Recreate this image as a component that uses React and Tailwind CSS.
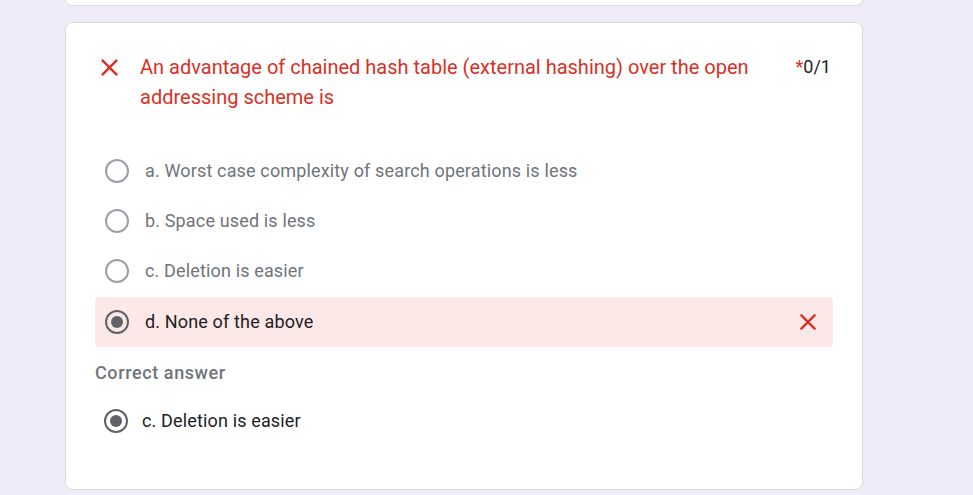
import React from 'react';

const options = [
  { id: 'a', label: 'a. Worst case complexity of search operations is less' },
  { id: 'b', label: 'b. Space used is less' },
  { id: 'c', label: 'c. Deletion is easier' },
  { id: 'd', label: 'd. None of the above', chosen: true },
];

const CloseIcon = ({ className }) => (
  <svg className={className} viewBox="0 0 24 24" fill="currentColor">
    <path d="M19 6.41 17.59 5 12 10.59 6.41 5 5 6.41 10.59 12 5 17.59 6.41 19 12 13.41 17.59 19 19 17.59 13.41 12z" />
  </svg>
);

const Radio = ({ checked }) =>
  checked ? (
    <span className="w-6 h-6 rounded-full border-2 border-[#5f6368] flex items-center justify-center shrink-0">
      <span className="w-3 h-3 rounded-full bg-[#5f6368]" />
    </span>
  ) : (
    <span className="w-6 h-6 rounded-full border-2 border-[#9aa0a6] shrink-0" />
  );

const App = () => {
  return (
    <div className="min-h-screen bg-[#f0ebf8] font-['Roboto',sans-serif]">
      <div className="ml-[65px] w-[798px]">
        {/* bottom of the previous question card */}
        <div className="h-[6px] bg-white border border-t-0 border-[#dadce0] rounded-b-lg" />

        <div className="mt-4 bg-white border border-[#dadce0] rounded-lg px-[29px] pt-[29px] pb-[47px]">
          <div className="flex items-start">
            <div className="w-[29px] h-[30px] flex items-center justify-center shrink-0">
              <CloseIcon className="w-[29px] h-[29px] text-[#d93025]" />
            </div>
            <div className="flex-1 ml-4 pr-4 text-[20px] leading-[30px] text-[#d93025]">
              An advantage of chained hash table (external hashing) over the open addressing scheme is
            </div>
            <div className="text-[18px] leading-[30px] text-[#202124] pr-[2px]">
              <span className="text-[#d93025]">*</span>0/1
            </div>
          </div>

          <div className="mt-[34px] flex flex-col">
            {options.map(o => (
              <div
                key={o.id}
                className={`h-[50px] flex items-center pl-[10px] pr-[11px] rounded ${o.chosen ? 'bg-[#fce8e6] mt-px' : ''}`}
              >
                <Radio checked={o.chosen} />
                <span className={`ml-4 flex-1 text-[18px] leading-[22px] pb-px tracking-[0.15px] ${o.chosen ? 'text-[#202124]' : 'text-[#70757a]'}`}>
                  {o.label}
                </span>
                {o.chosen && <CloseIcon className="w-[28px] h-[28px] text-[#d93025]" />}
              </div>
            ))}
          </div>

          <div className="mt-[16px] text-[18px] font-medium tracking-[0.6px] text-[#70757a] leading-[20px]">Correct answer</div>

          <div className="mt-[17px] h-[42px] flex items-center pl-[9px]">
            <Radio checked />
            <span className="ml-[14px] text-[18px] leading-[22px] tracking-[0.15px] text-[#202124]">c. Deletion is easier</span>
          </div>
        </div>
      </div>
    </div>
  );
};

export default App;
